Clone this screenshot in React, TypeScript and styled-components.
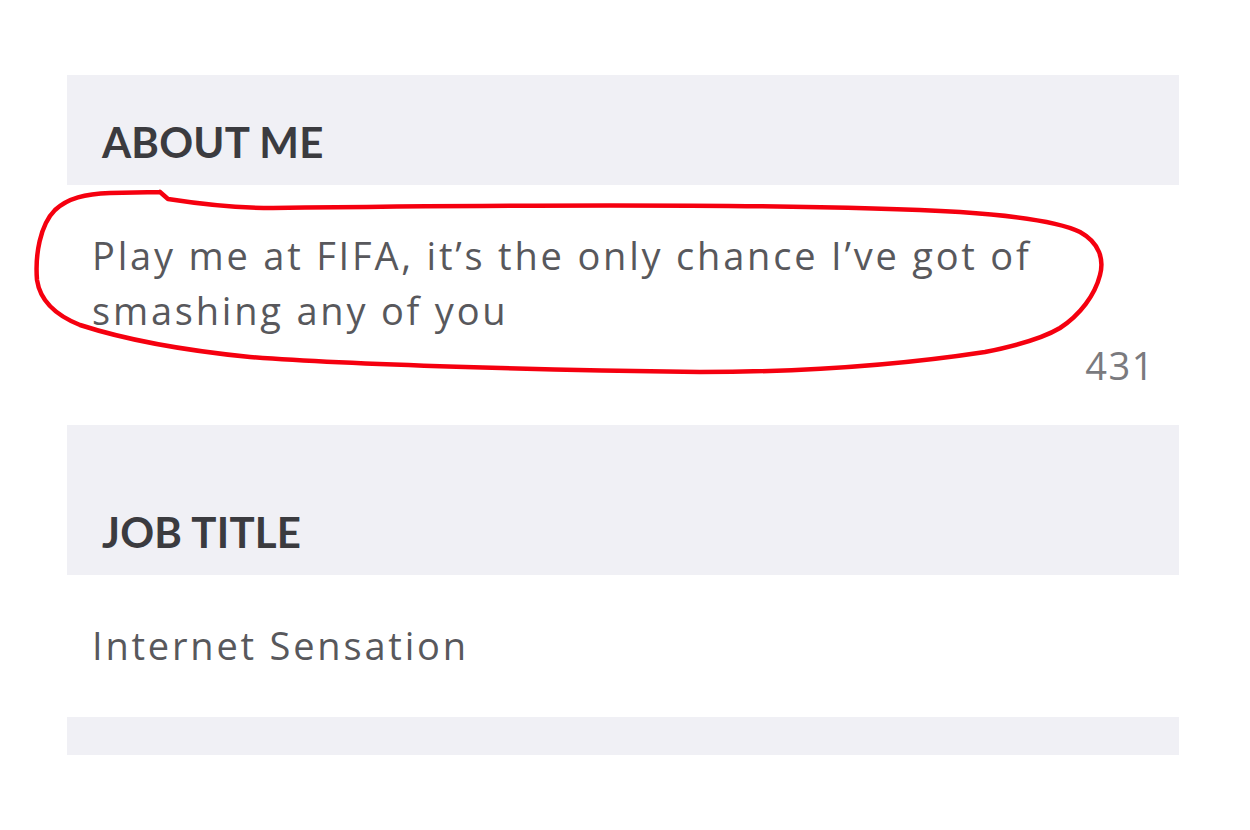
import React from "react";
import styled, { createGlobalStyle } from "styled-components";

const Global = createGlobalStyle`
  html, body { margin: 0; padding: 0; background: #ffffff; }
  body { font-family: "Lato", "Open Sans", sans-serif; }
`;

const Page = styled.div`
  position: relative;
  width: 1250px;
  height: 830px;
  overflow: hidden;
  background: #ffffff;
  padding-top: 75px;
  box-sizing: border-box;
`;

const Panel = styled.div`
  margin-left: 67px;
  width: 1112px;
  display: flex;
  flex-direction: column;
`;

const SectionHeader = styled.div<{ $h: number }>`
  height: ${(p) => p.$h}px;
  background: #f0f0f5;
  display: flex;
  align-items: flex-end;
  padding: 0 0 22px 35px;
  box-sizing: border-box;
`;

const HeaderText = styled.span`
  font-family: "Lato", "Open Sans", sans-serif;
  font-weight: 700;
  font-size: 42px;
  line-height: 42px;
  color: #3b3b3f;
  letter-spacing: 0.2px;
`;

const Field = styled.div<{ $h: number }>`
  height: ${(p) => p.$h}px;
  background: #ffffff;
  padding: 43px 24px 0 25px;
  box-sizing: border-box;
  display: flex;
  flex-direction: column;
`;

const FieldText = styled.div`
  font-family: "Open Sans", "Lato", sans-serif;
  font-size: 38px;
  line-height: 55px;
  color: #58585c;
  max-width: 1000px;
  letter-spacing: 2.8px;
  font-variant-ligatures: none;
`;

const Counter = styled.div`
  align-self: flex-end;
  font-family: "Open Sans", "Lato", sans-serif;
  font-size: 38px;
  line-height: 55px;
  letter-spacing: 1.5px;
  color: #7a7a7e;
`;

const Band = styled.div`
  height: 38px;
  background: #f0f0f5;
`;

const Scribble = styled.svg`
  position: absolute;
  left: 0;
  top: 0;
  pointer-events: none;
`;

export default function App() {
  return (
    <Page>
      <Global />
      <Panel>
        <SectionHeader $h={110}>
          <HeaderText>ABOUT ME</HeaderText>
        </SectionHeader>
        <Field $h={240}>
          <FieldText>
            Play me at FIFA, it’s the only chance I’ve got of smashing any of you
          </FieldText>
          <Counter>431</Counter>
        </Field>
        <SectionHeader $h={150}>
          <HeaderText>JOB TITLE</HeaderText>
        </SectionHeader>
        <Field $h={142}>
          <FieldText>Internet Sensation</FieldText>
        </Field>
        <Band />
      </Panel>
      <Scribble width="1250" height="830" viewBox="0 0 1250 830">
        <path
          d="M 160 192 L 168 199 C 200 204, 240 208, 273 208 C 500 205, 800 203, 960 212 C 1020 216, 1060 222, 1080 232 C 1100 243, 1104 260, 1100 275 C 1095 295, 1080 315, 1060 328 C 1040 340, 1010 347, 985 352 C 900 365, 800 372, 700 372 C 550 370, 350 365, 250 357 C 180 350, 120 338, 80 325 C 55 315, 40 300, 37 280 C 35 255, 40 225, 55 210 C 68 198, 85 194, 110 193 L 160 192"
          fill="none"
          stroke="#f5000f"
          strokeWidth="4.5"
          strokeLinejoin="round"
          strokeLinecap="round"
        />
      </Scribble>
    </Page>
  );
}
